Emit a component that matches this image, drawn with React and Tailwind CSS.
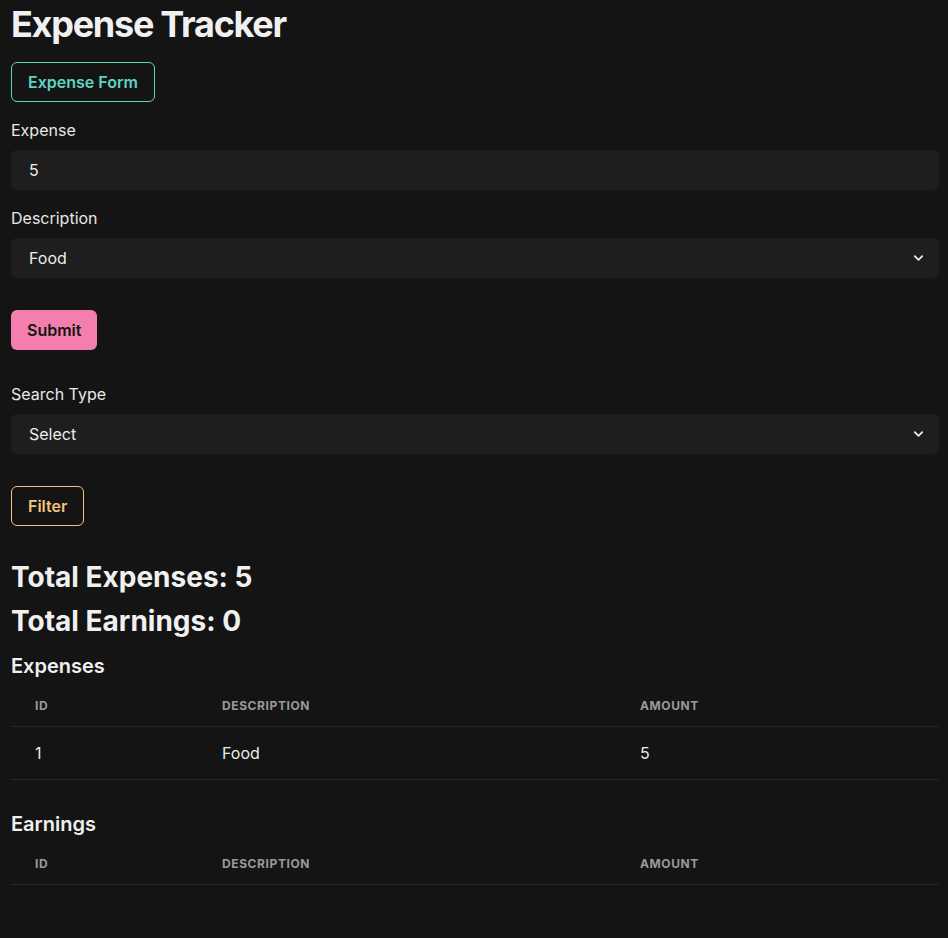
import { ChevronDown } from 'lucide-react'

const expenses = [{ id: 1, description: 'Food', amount: 5 }]
const earnings = []

function Field({ label, children, className = '' }) {
  return (
    <div className={className}>
      <label className="block text-base leading-6 mb-2 text-[#e8e8e8]">{label}</label>
      {children}
    </div>
  )
}

function Select({ value, options }) {
  return (
    <div className="relative">
      <select
        defaultValue={value}
        className="w-full h-10 appearance-none rounded-md bg-[#1e1e1e] pl-[18px] pr-10 text-base text-[#ececec] outline-none"
      >
        {options.map((o) => <option key={o}>{o}</option>)}
      </select>
      <ChevronDown size={15} strokeWidth={3} className="absolute right-[13px] top-1/2 -translate-y-1/2 text-[#e6e6e6] pointer-events-none" />
    </div>
  )
}

function Table({ rows }) {
  return (
    <table className="w-full mt-2 border-collapse table-fixed">
      <colgroup>
        <col className="w-[187px]" />
        <col className="w-[418px]" />
        <col />
      </colgroup>
      <thead>
        <tr className="border-b border-[#262626]">
          <th className="px-6 py-3 text-left text-xs leading-4 font-bold tracking-wider uppercase text-[#9a9a9a]">ID</th>
          <th className="px-6 py-3 text-left text-xs leading-4 font-bold tracking-wider uppercase text-[#9a9a9a]">Description</th>
          <th className="px-6 py-3 text-left text-xs leading-4 font-bold tracking-wider uppercase text-[#9a9a9a]">Amount</th>
        </tr>
      </thead>
      <tbody>
        {rows.map((r) => (
          <tr key={r.id} className="border-b border-[#262626]">
            <td className="px-6 py-[14px] leading-6 text-base">{r.id}</td>
            <td className="px-6 py-[14px] leading-6 text-base">{r.description}</td>
            <td className="px-6 py-[14px] leading-6 text-base">{r.amount}</td>
          </tr>
        ))}
      </tbody>
    </table>
  )
}

export default function App() {
  return (
    <div className="min-h-screen bg-[#141414] text-[#ececec] font-['Inter',sans-serif] pl-[11px] pr-[9px] pb-12">
      <h1 className="text-[36px] leading-[44px] font-bold tracking-[-0.035em] pt-[2px] text-[#f0f0f0]">Expense Tracker</h1>

      <button className="mt-4 h-10 px-4 rounded-md border border-[#5fd4c3] text-[#5fd4c3] font-semibold text-base">
        Expense Form
      </button>

      <Field label="Expense" className="mt-4">
        <input
          defaultValue="5"
          className="w-full h-10 rounded-md bg-[#1e1e1e] px-[18px] text-base text-[#ececec] outline-none"
        />
      </Field>

      <Field label="Description" className="mt-4">
        <Select value="Food" options={['Food', 'Transport', 'Rent']} />
      </Field>

      <button className="mt-8 h-10 px-4 rounded-md bg-[#f47fae] text-[#141414] font-semibold text-base">
        Submit
      </button>

      <Field label="Search Type" className="mt-8">
        <Select value="Select" options={['Select', 'Expenses', 'Earnings']} />
      </Field>

      <button className="mt-8 h-10 px-4 rounded-md border border-[#f0c47c] text-[#f0c47c] font-semibold text-base">
        Filter
      </button>

      <h2 className="mt-[29px] text-[28px] leading-[44px] font-bold text-[#f0f0f0]">Total Expenses: 5</h2>
      <h2 className="text-[28px] leading-[44px] font-bold text-[#f0f0f0]">Total Earnings: 0</h2>

      <h3 className="mt-[11px] text-xl leading-6 font-semibold text-[#f0f0f0]">Expenses</h3>
      <Table rows={expenses} />

      <h3 className="mt-8 text-xl leading-6 font-semibold text-[#f0f0f0]">Earnings</h3>
      <Table rows={earnings} />
    </div>
  )
}
